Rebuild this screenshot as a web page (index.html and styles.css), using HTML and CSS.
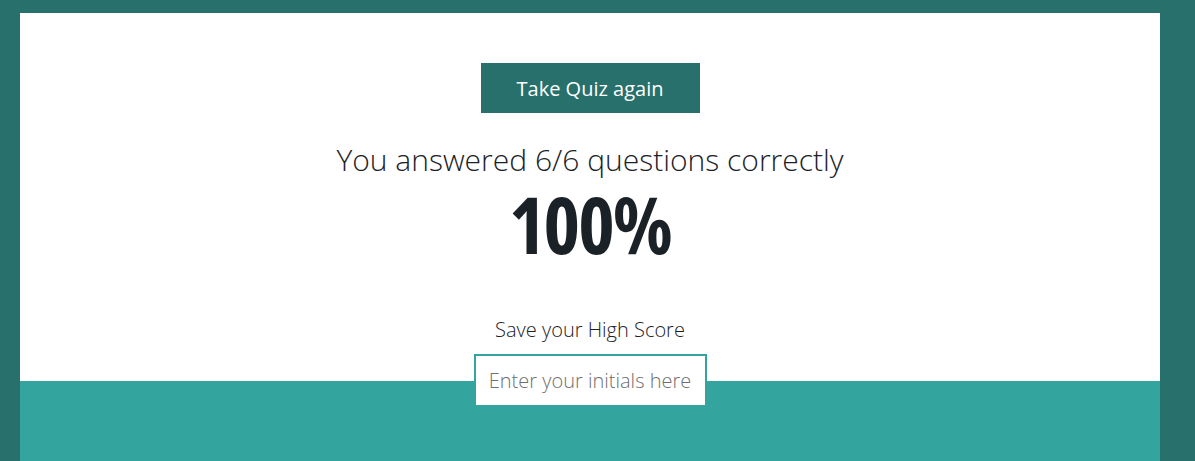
FILE: index.html
```html
<!DOCTYPE html>
<html lang="en">
<head>
<meta charset="utf-8">
<title>Quiz Results</title>
<link rel="stylesheet" href="styles.css">
</head>
<body>
<main class="page">
  <section class="result">
    <button class="btn-again" type="button">Take Quiz again</button>
    <h2 class="summary">You answered 6/6 questions correctly</h2>
    <div class="score">100%</div>
    <label class="save-label" for="initials">Save your High Score</label>
    <input class="initials" id="initials" type="text" placeholder="Enter your initials here">
  </section>
  <section class="footer-band"></section>
</main>
</body>
</html>
```
FILE: styles.css
```css
html, body {
  margin: 0;
  padding: 0;
}
body {
  background: #27706b;
  font-family: "Open Sans", "Liberation Sans", sans-serif;
  color: #1b2227;
  height: 461px;
  overflow: hidden;
}
.page {
  margin: 13px 35px 0 20px;
}
.result {
  background: #ffffff;
  display: flex;
  flex-direction: column;
  align-items: center;
  padding-top: 50px;
}
.result > * {
  flex-shrink: 0;
}
.btn-again {
  width: 219px;
  height: 50px;
  border: none;
  background: #27706b;
  color: #ffffff;
  font-family: "Open Sans", sans-serif;
  font-size: 20px;
  font-weight: 400;
  padding: 0;
  cursor: pointer;
}
.summary {
  margin: 28px 0 0;
  font-size: 30px;
  font-weight: 300;
  line-height: 38px;
}
.score {
  font-size: 78px;
  font-weight: 700;
  font-stretch: 75%;
  letter-spacing: -2px;
  line-height: 84px;
  margin-top: 3px;
}
.save-label {
  margin-top: 50px;
  font-size: 20px;
  font-weight: 300;
  line-height: 28px;
}
.initials {
  position: relative;
  margin-top: 10px;
  margin-bottom: -26px;
  width: 233px;
  height: 53px;
  box-sizing: border-box;
  border: 2px solid #33a59e;
  background: #ffffff;
  font-family: "Open Sans", sans-serif;
  font-size: 20px;
  font-weight: 300;
  text-align: center;
  color: #1b2227;
  outline: none;
}
.initials::placeholder {
  color: #6f6f6f;
}
.footer-band {
  background: #33a59e;
  height: 100px;
}
```
